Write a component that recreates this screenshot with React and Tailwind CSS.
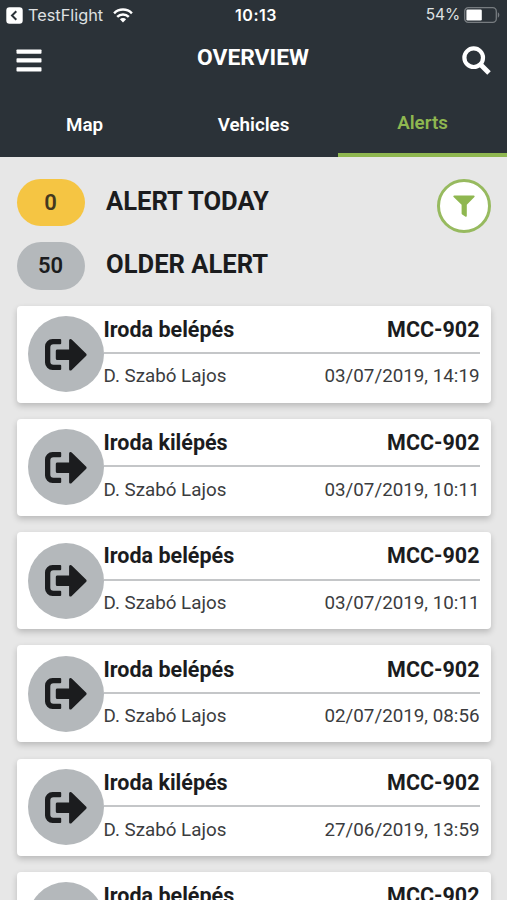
import clsx from "clsx"

const tabs = ["Map", "Vehicles", "Alerts"]

const alerts = [
  { id: 1, title: "Iroda belépés", driver: "D. Szabó Lajos", plate: "MCC-902", date: "03/07/2019, 14:19" },
  { id: 2, title: "Iroda kilépés", driver: "D. Szabó Lajos", plate: "MCC-902", date: "03/07/2019, 10:11" },
  { id: 3, title: "Iroda belépés", driver: "D. Szabó Lajos", plate: "MCC-902", date: "03/07/2019, 10:11" },
  { id: 4, title: "Iroda belépés", driver: "D. Szabó Lajos", plate: "MCC-902", date: "02/07/2019, 08:56" },
  { id: 5, title: "Iroda kilépés", driver: "D. Szabó Lajos", plate: "MCC-902", date: "27/06/2019, 13:59" },
  { id: 6, title: "Iroda belépés", driver: "D. Szabó Lajos", plate: "MCC-902", date: "27/06/2019, 09:24" },
]

function BackIcon() {
  return (
    <svg width="17" height="17" viewBox="0 0 17 17" className="block">
      <rect x="0.3" y="0.3" width="16.4" height="16.4" rx="3.2" fill="#fff" />
      <path d="M10.3 4.2 6 8.5l4.3 4.3" fill="none" stroke="#2b3238" strokeWidth="2" />
    </svg>
  )
}

function WifiIcon() {
  return (
    <svg width="20" height="15" viewBox="0 0 20 15" fill="none" stroke="#fff" strokeWidth="2.5" className="block">
      <path d="M1.1 5.3a12.6 12.6 0 0 1 17.8 0" />
      <path d="M4.2 8.8a8.2 8.2 0 0 1 11.6 0" />
      <path d="M10 14.5 6.9 11.3a4.4 4.4 0 0 1 6.2 0Z" fill="#fff" stroke="none" />
    </svg>
  )
}

function BatteryIcon() {
  return (
    <svg width="36" height="16" viewBox="0 0 36 16" className="block">
      <rect x="0.7" y="0.7" width="31.6" height="14.6" rx="3.6" fill="none" stroke="#777c80" strokeWidth="1.3" />
      <rect x="2.4" y="2.6" width="15.4" height="10.8" rx="1.2" fill="#fff" />
      <path d="M33.8 5.3c2 .9 2 4.5 0 5.4Z" fill="#777c80" />
    </svg>
  )
}

function MenuIcon() {
  return (
    <svg width="26" height="23" viewBox="0 0 26 23" fill="#fff" className="block">
      <rect x="0.5" y="0.5" width="25" height="4.2" rx="0.7" />
      <rect x="0.5" y="9.3" width="25" height="4.2" rx="0.7" />
      <rect x="0.5" y="18.2" width="25" height="4.2" rx="0.7" />
    </svg>
  )
}

function SearchIcon() {
  return (
    <svg width="29" height="29" viewBox="0 0 29 29" fill="none" stroke="#fff" className="block">
      <circle cx="11.7" cy="11.7" r="9.3" strokeWidth="4.2" />
      <path d="m18.5 18.5 8.5 8.5" strokeWidth="5" />
    </svg>
  )
}

function FilterIcon() {
  return (
    <svg width="22" height="22" viewBox="0 0 22 22" fill="#8fb750" className="block">
      <path d="M1.3.4h19.4c.9 0 1.3 1 .7 1.6L13.8 9.700v11c0 .9-.9 1.300-1.600.8l-3-2.100c-.4-.3-.6-.6-.6-1V9.700L.6 2C0 1.400.4.4 1.300.4Z" />
    </svg>
  )
}

function ExitIcon() {
  return (
    <svg width="42" height="33" viewBox="0 0 42 33" fill="#1b1c1e" className="ml-[1px] block">
      <path d="M15.200 1H7.500A7.500 7.500 0 0 0 0 8.500v16A7.500 7.500 0 0 0 7.500 32h7.700a1 1 0 0 0 1-1v-3.200a1 1 0 0 0-1-1H8.500A3.200 3.200 0 0 1 5.300 23.600V9.400A3.200 3.200 0 0 1 8.500 6.200h6.700a1 1 0 0 0 1-1V2a1 1 0 0 0-1-1Z" />
      <path d="M12.300 11.400h11.800V2.600c0-1.700 1.500-2.200 2.600-1.100l14.300 14c.8.700.8 1.900 0 2.600L26.700 32c-1.100 1.100-2.600.5-2.600-1.100v-9H12.300a1.500 1.500 0 0 1-1.500-1.500v-7.500c0-.8.700-1.500 1.500-1.500Z" />
    </svg>
  )
}

function StatusBar() {
  return (
    <div className="grid h-[30px] grid-cols-[1fr_auto_1fr] items-center pl-[6px] pr-[7px] font-['Inter',sans-serif] text-white">
      <div className="flex items-center">
        <BackIcon />
        <span className="ml-[5px] mr-[10px] text-[16.3px] text-[#dfe1e2]">TestFlight</span>
        <WifiIcon />
      </div>
      <span className="pl-[6px] text-center text-[16px] font-semibold tracking-[0.5px]">10:13</span>
      <div className="flex items-center justify-end gap-[4px]">
        <span className="text-[15.5px] tracking-[-0.1px] text-[#dfe1e2]">54%</span>
        <BatteryIcon />
      </div>
    </div>
  )
}

function Header() {
  return (
    <header className="h-[157px] bg-[#2b3238] text-white">
      <StatusBar />
      <div className="flex h-[63px] items-start justify-between pl-4 pr-4">
        <button className="pt-[19px]"><MenuIcon /></button>
        <h1 className="pl-[2px] pt-[14px] text-[22.8px] font-bold leading-7">OVERVIEW</h1>
        <button className="pt-4"><SearchIcon /></button>
      </div>
      <nav className="grid h-16 grid-cols-3">
        {tabs.map((tab) => (
          <button
            key={tab}
            className={clsx(
              "flex items-center justify-center pt-[1px] text-[18.8px] font-semibold",
              tab === "Alerts" && "border-b-4 border-[#8fb750] text-[#8fb750]"
            )}
          >
            {tab}
          </button>
        ))}
      </nav>
    </header>
  )
}

function Counter({ count, label, className }) {
  return (
    <div className="flex items-center">
      <span className={clsx("flex h-[47.5px] w-[68px] items-center justify-center rounded-full text-[22px] font-semibold", className)}>
        {count}
      </span>
      <span className="ml-[21.5px] pb-[3px] text-[25.6px] font-bold leading-8">{label}</span>
    </div>
  )
}

function AlertCard({ alert }) {
  return (
    <li className="flex h-[97px] shrink-0 items-center rounded-[4px] bg-white pl-[11px] pr-[11px] shadow-[0_3px_6px_rgba(0,0,0,0.2)]">
      <div className="flex size-[76px] shrink-0 items-center justify-center rounded-full bg-[#b4b8bb]">
        <ExitIcon />
      </div>
      <div className="min-w-0 flex-1">
        <div className="flex h-[47px] items-center justify-between border-b-2 border-[#c4c6c8] pt-[1px] text-[21.5px] font-bold">
          <span>{alert.title}</span>
          <span>{alert.plate}</span>
        </div>
        <div className="flex h-[47px] items-center justify-between pb-[2px] text-[18.8px] text-[#3b3c3e]">
          <span>{alert.driver}</span>
          <span>{alert.date}</span>
        </div>
      </div>
    </li>
  )
}

function App() {
  return (
    <div className="h-[900px] w-[507px] overflow-hidden bg-[#e7e7e7] font-['Roboto',sans-serif] text-[#1b1c1e]">
      <Header />
      <main className="px-[16.5px] pt-[21.5px]">
        <div className="flex items-start justify-between">
          <div className="flex flex-col gap-4">
            <Counter count={0} label="ALERT TODAY" className="bg-[#f5c543] text-[#44391f]" />
            <Counter count={50} label="OLDER ALERT" className="bg-[#b4b8bb]" />
          </div>
          <button className="flex size-[54px] items-center justify-center rounded-full border-[3px] border-[#97ba5f] bg-white">
            <FilterIcon />
          </button>
        </div>
        <ul className="mt-4 flex flex-col gap-[16.3px]">
          {alerts.map((alert) => (
            <AlertCard key={alert.id} alert={alert} />
          ))}
        </ul>
      </main>
    </div>
  )
}

export default App
